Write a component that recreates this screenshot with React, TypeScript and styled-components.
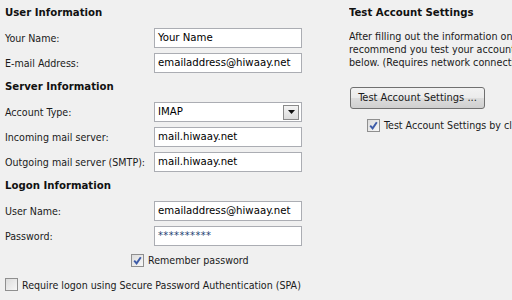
import styled, { createGlobalStyle } from 'styled-components';

const GlobalStyle = createGlobalStyle`
  html, body {
    margin: 0;
    padding: 0;
    background: #f0f0f0;
    overflow: hidden;
  }
  body {
    font-family: "DejaVu Sans Condensed", "DejaVu Sans", Tahoma, sans-serif;
    font-size: 10.6px;
    color: #1a1a1a;
  }
`;

export default function App() {
  return (
    <>
      <GlobalStyle />
      <Page>
        <LeftCol>
          <Heading>User Information</Heading>
          <Row>
            <Label>Your Name:</Label>
            <TextBox>Your Name</TextBox>
          </Row>
          <Row>
            <Label>E-mail Address:</Label>
            <TextBox>emailaddress@hiwaay.net</TextBox>
          </Row>

          <Heading>Server Information</Heading>
          <Row>
            <Label>Account Type:</Label>
            <Select>
              <span>IMAP</span>
              <DropButton>
                <svg width="7" height="4" viewBox="0 0 7 4">
                  <path d="M0 0h7L3.5 4z" fill="#111" />
                </svg>
              </DropButton>
            </Select>
          </Row>
          <Row>
            <Label>Incoming mail server:</Label>
            <TextBox>mail.hiwaay.net</TextBox>
          </Row>
          <Row>
            <Label>Outgoing mail server (SMTP):</Label>
            <TextBox>mail.hiwaay.net</TextBox>
          </Row>

          <Heading>Logon Information</Heading>
          <Row>
            <Label>User Name:</Label>
            <TextBox>emailaddress@hiwaay.net</TextBox>
          </Row>
          <Row>
            <Label>Password:</Label>
            <TextBox password>**********</TextBox>
          </Row>
          <CheckRow indent={126}>
            <CheckBox checked />
            <span>Remember password</span>
          </CheckRow>
          <CheckRow indent={0}>
            <CheckBox />
            <span>Require logon using Secure Password Authentication (SPA)</span>
          </CheckRow>
        </LeftCol>

        <RightCol>
          <Heading>Test Account Settings</Heading>
          <Para>
            <span>After filling out the information on this screen, we</span>
            <span>recommend you test your account by clicking the button</span>
            <span>below. (Requires network connection)</span>
          </Para>
          <Button>Test Account Settings ...</Button>
          <CheckRow indent={18}>
            <CheckBox checked />
            <span>Test Account Settings by clicking the Next button</span>
          </CheckRow>
        </RightCol>
      </Page>
    </>
  );
}

function CheckBox({ checked }: { checked?: boolean }) {
  return (
    <Box>
      {checked && (
        <svg width="9" height="9" viewBox="0 0 9 9">
          <path d="M1.2 4.6 L3.6 7.4 L7.8 1.2" stroke="#3d5ba8" strokeWidth="1.9" fill="none" />
        </svg>
      )}
    </Box>
  );
}

const Page = styled.div`
  display: flex;
  width: 512px;
  height: 300px;
  padding: 4px 0 0 5px;
  box-sizing: border-box;
`;

const LeftCol = styled.div`
  width: 344px;
  flex-shrink: 0;
  display: flex;
  flex-direction: column;
`;

const RightCol = styled.div`
  flex: 1;
  min-width: 0;
  display: flex;
  flex-direction: column;
  white-space: nowrap;
  overflow: hidden;
`;

const Heading = styled.div`
  height: 18px;
  line-height: 18px;
  font-size: 11.3px;
  font-weight: bold;
  margin-bottom: 6px;
  color: #111;
`;

const Row = styled.div`
  display: flex;
  align-items: center;
  height: 20px;
  margin-bottom: 5px;
`;

const Label = styled.div`
  width: 149px;
  flex-shrink: 0;
  white-space: nowrap;
`;

const TextBox = styled.div<{ password?: boolean }>`
  width: 148px;
  height: 20px;
  box-sizing: border-box;
  border: 1px solid #abadb3;
  background: #fff;
  padding: 0 3px;
  line-height: 18px;
  white-space: nowrap;
  overflow: hidden;
  color: ${(p) => (p.password ? '#1d3f73' : '#000')};
  font-size: ${(p) => (p.password ? '11px' : '11.3px')};
  letter-spacing: ${(p) => (p.password ? '0.4px' : '0')};
`;

const Select = styled(TextBox)`
  display: flex;
  align-items: center;
  justify-content: space-between;
  padding: 0 2px 0 3px;
`;

const DropButton = styled.div`
  width: 16px;
  height: 15px;
  box-sizing: border-box;
  border: 1px solid #8a8a8a;
  background: linear-gradient(#f4f4f4, #dcdcdc);
  display: flex;
  align-items: center;
  justify-content: center;
`;

const CheckRow = styled.div<{ indent: number }>`
  display: flex;
  align-items: center;
  gap: 4px;
  height: 20px;
  margin-bottom: 6px;
  padding-left: ${(p) => p.indent}px;
  white-space: nowrap;
`;

const Box = styled.div`
  width: 13px;
  height: 13px;
  box-sizing: border-box;
  border: 1px solid #8f8f8f;
  background: linear-gradient(135deg, #dcdcdc, #f7f7f7);
  display: flex;
  align-items: center;
  justify-content: center;
  flex-shrink: 0;
`;

const Para = styled.div`
  display: flex;
  flex-direction: column;
  line-height: 13px;
  font-size: 10.7px;
  margin-top: 2px;
  margin-bottom: 18px;
`;

const Button = styled.div`
  align-self: flex-start;
  margin-left: 1px;
  width: 135px;
  height: 22px;
  box-sizing: border-box;
  border: 1px solid #707070;
  border-radius: 3px;
  background: linear-gradient(#f2f2f2 0%, #ebebeb 50%, #dddddd 51%, #cfcfcf 100%);
  font-size: 11px;
  line-height: 20px;
  text-align: center;
  margin-bottom: 6px;
`;
